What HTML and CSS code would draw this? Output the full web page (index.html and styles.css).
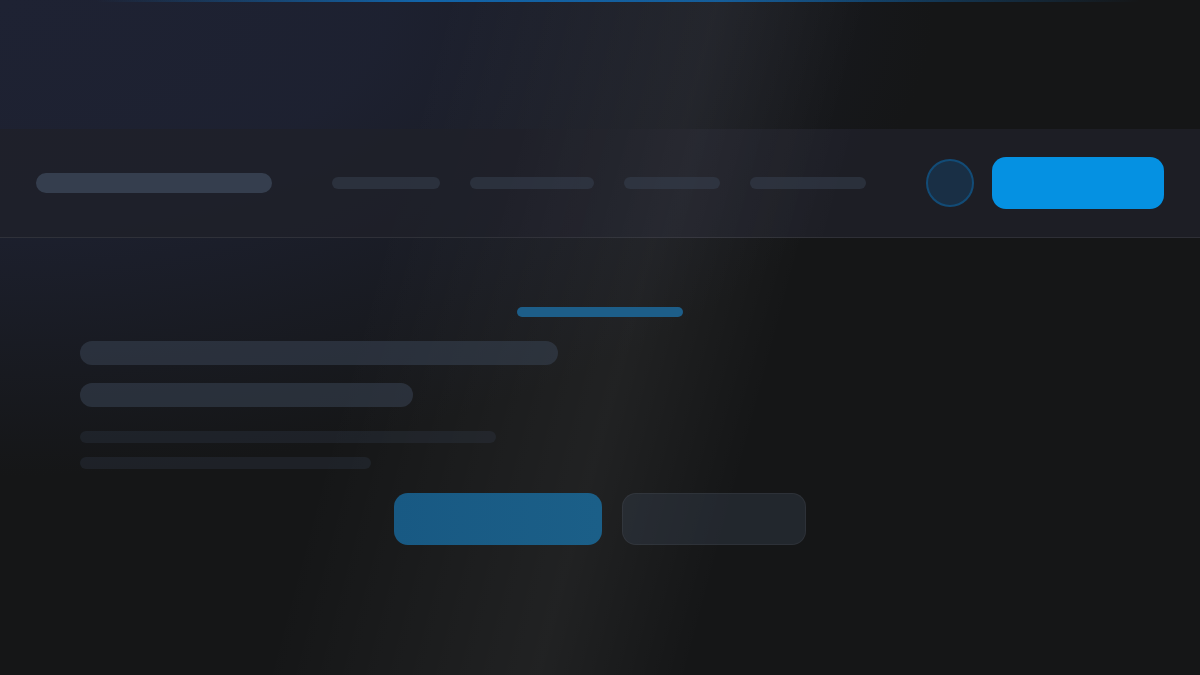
FILE: index.html
```html
<!DOCTYPE html>
<html lang="en">
<head>
<meta charset="utf-8">
<title>Loading</title>
<link rel="stylesheet" href="styles.css">
</head>
<body>
<div class="page">
  <div class="topline"></div>
  <header class="header">
    <div class="sk logo"></div>
    <nav class="nav">
      <div class="sk link w108"></div>
      <div class="sk link w124"></div>
      <div class="sk link w96"></div>
      <div class="sk link w116"></div>
    </nav>
    <div class="actions">
      <div class="avatar"></div>
      <div class="cta"></div>
    </div>
  </header>
  <main class="hero">
    <div class="eyebrow"></div>
    <div class="sk title w478"></div>
    <div class="sk title w333 t2"></div>
    <div class="sk text w416"></div>
    <div class="sk text w291 t4"></div>
    <div class="buttons">
      <div class="btn primary"></div>
      <div class="btn secondary"></div>
    </div>
  </main>
</div>
</body>
</html>
```

FILE: styles.css
```css
html, body {
  margin: 0;
  padding: 0;
  height: 100%;
}
body {
  font-family: "Inter", "Liberation Sans", sans-serif;
  background-color: #151617;
  background-image:
    linear-gradient(105deg, rgba(255,255,255,0) 32%, rgba(255,255,255,0.05) 52%, rgba(255,255,255,0) 63%),
    radial-gradient(ellipse 1100px 560px at 0 0, rgba(30,34,51,1) 0%, rgba(30,34,51,0.9) 35%, rgba(30,34,51,0) 85%);
  overflow: hidden;
}
.page {
  width: 1200px;
  height: 675px;
  display: flex;
  flex-direction: column;
}
.topline {
  height: 2px;
  background: linear-gradient(to right, rgba(11,111,184,0) 8%, rgba(16,112,190,0.85) 35%, rgba(16,112,190,0.75) 60%, rgba(11,111,184,0) 95%);
  margin-bottom: 127px;
}
.header {
  height: 108px;
  border-bottom: 1px solid rgba(255,255,255,0.08);
  background:
    linear-gradient(105deg, rgba(255,255,255,0) 42%, rgba(255,255,255,0.035) 57%, rgba(255,255,255,0) 70%),
    rgba(31,33,41,0.8);
  display: flex;
  align-items: center;
  gap: 60px;
  padding: 0 36px;
}
.logo {
  width: 236px;
  height: 20px;
  border-radius: 10px;
  background: rgba(55,65,81,0.92);
}
.nav {
  display: flex;
  gap: 30px;
}
.link {
  height: 12px;
  border-radius: 6px;
  background: rgba(55,65,81,0.5);
}
.w108 { width: 108px; }
.w124 { width: 124px; }
.w96 { width: 96px; }
.w116 { width: 116px; }
.actions {
  display: flex;
  align-items: center;
  gap: 18px;
}
.avatar {
  width: 44px;
  height: 44px;
  border-radius: 50%;
  border: 2px solid rgba(12,100,160,0.55);
  background: rgba(20,80,130,0.35);
}
.cta {
  width: 172px;
  height: 52px;
  border-radius: 14px;
  background: #0591e2;
}
.hero {
  padding: 69px 80px 0;
  display: flex;
  flex-direction: column;
  align-items: flex-start;
}
.eyebrow {
  align-self: center;
  width: 166px;
  height: 10px;
  border-radius: 5px;
  background: #1d5e89;
  margin-bottom: 24px;
}
.title {
  height: 24px;
  border-radius: 12px;
  background: rgba(55,65,81,0.58);
}
.t2 { margin-top: 18px; }
.w478 { width: 478px; }
.w333 { width: 333px; }
.text {
  height: 12px;
  border-radius: 6px;
  margin-top: 24px;
  background: rgba(55,65,81,0.28);
}
.t4 { margin-top: 14px; }
.w416 { width: 416px; }
.w291 { width: 291px; }
.buttons {
  align-self: center;
  display: flex;
  gap: 20px;
  margin-top: 24px;
}
.btn {
  height: 52px;
  border-radius: 14px;
  box-sizing: border-box;
}
.primary {
  width: 208px;
  background: linear-gradient(to right, #185983, #1b5f88);
}
.secondary {
  width: 184px;
  background: rgba(55,65,81,0.4);
  border: 1px solid rgba(255,255,255,0.05);
}
```
